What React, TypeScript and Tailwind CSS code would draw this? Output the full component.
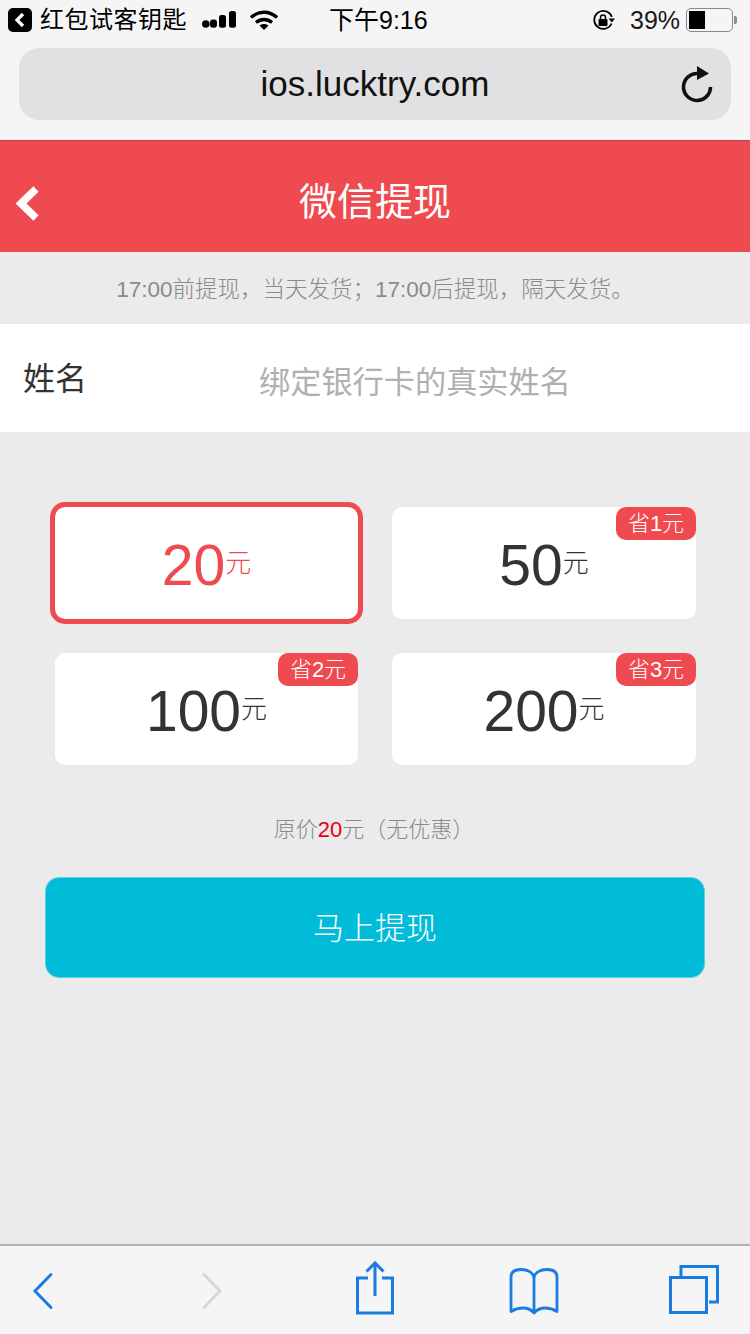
const cjk = "font-['Liberation_Sans','Noto_Sans_CJK_SC',sans-serif]";

const amounts = [
  { value: '20', selected: true },
  { value: '50', badge: '省1元' },
  { value: '100', badge: '省2元' },
  { value: '200', badge: '省3元' },
];

function StatusBar() {
  return (
    <div className="flex h-[40px] items-center text-black">
      <svg className="ml-[8px] shrink-0" width="24" height="24" viewBox="0 0 24 24">
        <rect width="24" height="24" rx="5" fill="#000" />
        <path d="M15 6l-6 6 6 6" fill="none" stroke="#fff" strokeWidth="3.2" />
      </svg>
      <span className="ml-[8px] w-[147px] text-[24px] leading-[30px] tracking-[0.5px] whitespace-nowrap">红包试客钥匙</span>
      <svg className="ml-[15px] shrink-0" width="34" height="20" viewBox="0 0 34 20">
        <circle cx="3.800" cy="14" r="3.800" />
        <rect x="8" y="9.500" width="7" height="8.300" rx="3" />
        <rect x="17" y="5" width="7" height="12.800" rx="2.500" />
        <rect x="27" y="1" width="7" height="16.800" rx="2.500" />
      </svg>
      <svg className="ml-[14px] shrink-0" width="28" height="20" viewBox="0 0 28 20">
        <path d="M1 7.500C8.500 .5 19.500 .5 27 7.500" fill="none" stroke="#000" strokeWidth="3.400" />
        <path d="M6 12.500c4.700-4 11.300-4 16 0" fill="none" stroke="#000" strokeWidth="3.400" />
        <path d="M9.500 15.500c2.700-2 6.300-2 9 0L14 20z" />
      </svg>
      <span className="ml-[51px] w-[98px] text-[25px] leading-[30px] whitespace-nowrap">下午9:16</span>
      <svg className="ml-[165px] shrink-0" width="23" height="23" viewBox="0 0 23 23">
        <path d="M19.500 14.500A9 9 0 1 1 19.800 8" fill="none" stroke="#000" strokeWidth="1.800" />
        <path d="M16.500 9.500h6.500l-3.200 4z" />
        <rect x="6.500" y="10" width="9" height="7" rx="1" />
        <path d="M8.500 10.500V8.500a2.500 2.500 0 0 1 5 0v2" fill="none" stroke="#000" strokeWidth="1.500" />
      </svg>
      <span className="ml-[15px] w-[50px] text-[25px] leading-[30px] text-[#1a1a1a]">39%</span>
      <div className="ml-[6px] flex h-[24px] w-[47px] items-center rounded-[5px] border-[1.500px] border-[#8a8a8a] p-[2px]">
        <div className="h-full w-[16px] bg-black" />
      </div>
      <div className="ml-[1px] h-[8px] w-[3px] rounded-r-[2px] bg-[#8a8a8a]" />
    </div>
  );
}

function Toolbar() {
  return (
    <div className="flex h-[90px] items-center border-t-[2px] border-[#b2b2b2] bg-[#f5f5f5] pt-[2px]">
      <svg className="ml-[32px] shrink-0" width="22" height="38" viewBox="0 0 22 38">
        <path d="M19 2.500L3 19l16 16.500" fill="none" stroke="#1a7be0" strokeWidth="3" strokeLinecap="round" />
      </svg>
      <svg className="ml-[147px] shrink-0" width="22" height="38" viewBox="0 0 22 38">
        <path d="M3 2.500L19 19 3 35.500" fill="none" stroke="#d6d6d6" strokeWidth="3" strokeLinecap="round" />
      </svg>
      <svg className="ml-[133px] mb-[6px] shrink-0" width="38" height="54" viewBox="0 0 38 54">
        <path d="M12 17H1.500v35h35V17H26" fill="none" stroke="#1a7be0" strokeWidth="3" />
        <path d="M19 35V3M10.500 10.500L19 2l8.500 8.500" fill="none" stroke="#1a7be0" strokeWidth="3" />
      </svg>
      <svg className="ml-[114px] shrink-0" width="52" height="50" viewBox="0 0 52 50">
        <path
          d="M26 47c-3-3.500-7-5-11-5-4 0-8 1-12 3.500V11c0-5 4-7.500 10-7.500 6 0 13 2.500 13 9.500 0-7 7-9.500 13-9.500 6 0 10 2.500 10 7.500v34.500c-4-2.500-8-3.500-12-3.500-4 0-8 1.500-11 5zM26 13v34"
          fill="none"
          stroke="#1a7be0"
          strokeWidth="2.800"
          strokeLinejoin="round"
        />
      </svg>
      <svg className="ml-[109px] mb-[2px] shrink-0" width="50" height="50" viewBox="0 0 50 50">
        <path d="M12 11V1.500h36.500V37H40" fill="none" stroke="#1a7be0" strokeWidth="3" />
        <rect x="1.500" y="12.500" width="36" height="35" fill="none" stroke="#1a7be0" strokeWidth="3" />
      </svg>
    </div>
  );
}

export default function App() {
  return (
    <div className={`flex h-[1334px] w-[750px] flex-col overflow-hidden bg-[#ebebeb] ${cjk}`}>
      <div className="h-[140px] shrink-0 bg-[#f5f5f5]">
        <StatusBar />
        <div className="relative mx-[19px] mt-[8px] flex h-[72px] items-center justify-center rounded-[20px] bg-[#e1e1e4]">
          <span className="text-[35px] leading-[40px] text-[#111]">ios.lucktry.com</span>
          <svg className="absolute top-[17px] right-[17px]" width="34" height="38" viewBox="0 0 34 38">
            <path d="M18 8.500A13.500 13.500 0 1 0 30.500 22" fill="none" stroke="#111" strokeWidth="3.600" />
            <path d="M17 1l12 7.500L17 15z" fill="#111" />
          </svg>
        </div>
      </div>

      {/* 헤더 */}
      <div className="relative flex h-[112px] shrink-0 items-center justify-center border-t border-[#c4404d] bg-[#ef4a4f]">
        <svg className="absolute top-[44px] left-[14px]" width="28" height="36" viewBox="0 0 28 36">
          <path d="M22 4L7 18.500 22 33" fill="none" stroke="#fff" strokeWidth="7.500" />
        </svg>
        <span className="mt-[10px] text-[38px] leading-[48px] text-white">微信提现</span>
      </div>

      <div className="flex h-[72px] shrink-0 items-center justify-center pt-[3px] text-[22.500px] font-light text-[#8a8a8a]">
        17:00前提现，当天发货；17:00后提现，隔天发货。
      </div>

      <div className="flex h-[108px] shrink-0 items-center bg-white">
        <span className="mt-[2px] ml-[23px] w-[236px] text-[32px] leading-[40px] text-[#333]">姓名</span>
        <span className="mt-[10px] text-[31.200px] leading-[40px] text-[#b0b0b0]">绑定银行卡的真实姓名</span>
      </div>

      <div className="mt-[75px] ml-[55px] grid grid-cols-[303px_304px] gap-x-[34px] gap-y-[34px]">
        {amounts.map((item) => (
          <div
            key={item.value}
            className={`relative flex h-[112px] items-center justify-center rounded-[10px] bg-white ${
              item.selected ? 'text-[#ef4a4f] outline-[5px] outline-[#ef4a4f]' : 'text-[#333]'
            }`}
          >
            <span className="mt-[4px] text-[57px] leading-[64px]">{item.value}</span>
            <span className="mb-[1px] text-[26px] leading-[32px] font-light">元</span>
            {item.badge && (
              <span className="absolute top-0 right-0 flex h-[33px] w-[80px] items-center justify-center rounded-[10px] bg-[#ef4a4f] text-[22px] font-light text-white">
                {item.badge}
              </span>
            )}
          </div>
        ))}
      </div>

      <div className="mt-[50px] ml-[-2px] h-[30px] text-center text-[22px] leading-[30px] font-light text-[#8a8a8a]">
        原价<span className="text-[#e60012]">20</span>元（无优惠）
      </div>

      <div className="mx-[45px] mt-[32px] flex h-[101px] items-center justify-center rounded-[14px] border border-[#5fd0e2] bg-[#00bcd9] pt-[3px] text-[31px] font-light text-white">
        马上提现
      </div>

      <div className="flex-1" />
      <Toolbar />
    </div>
  );
}
